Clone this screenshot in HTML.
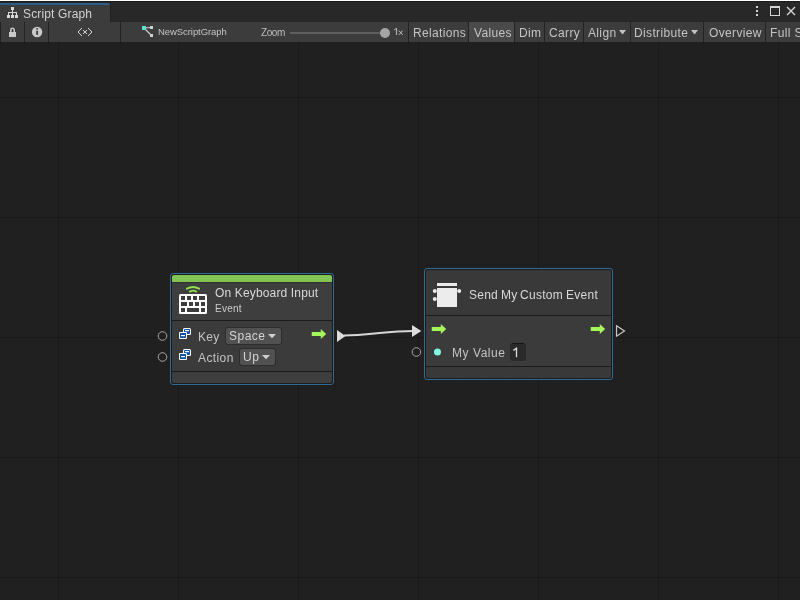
<!DOCTYPE html>
<html><head><meta charset="utf-8">
<style>
*{margin:0;padding:0;box-sizing:border-box}
html,body{-webkit-font-smoothing:antialiased;width:800px;height:600px;overflow:hidden;background:#202020;font-family:"Liberation Sans",sans-serif;}
.a{position:absolute}
.t{position:absolute;white-space:nowrap;line-height:1;will-change:transform}
.tb{font-size:12px;color:#c4c4c4;letter-spacing:0.35px}
#grid{position:absolute;left:0;top:42px;width:800px;height:558px;}
</style></head><body>
<!-- grid -->
<svg class="a" style="left:0;top:0" width="800" height="600">
  <defs>
    <pattern id="minor" x="10" y="1" width="12" height="12" patternUnits="userSpaceOnUse">
      <rect x="0" y="0" width="1" height="12" fill="#1e1e1e"/>
      <rect x="0" y="0" width="12" height="1" fill="#1e1e1e"/>
    </pattern>
    <pattern id="major" x="58" y="97" width="120" height="120" patternUnits="userSpaceOnUse">
      <rect x="0" y="0" width="1" height="120" fill="#191919"/>
      <rect x="0" y="0" width="120" height="1" fill="#191919"/>
    </pattern>
  </defs>
  <rect x="0" y="0" width="800" height="600" fill="#202020"/>
  <rect x="0" y="0" width="800" height="600" fill="url(#minor)"/>
  <rect x="0" y="0" width="800" height="600" fill="url(#major)"/>
</svg>

<!-- title strip -->
<div class="a" style="left:0;top:0;width:800px;height:1px;background:#fff"></div>
<div class="a" style="left:0;top:1px;width:800px;height:21px;background:#282828"></div>
<div class="a" style="left:0;top:1px;width:800px;height:1px;background:#1a1a1a"></div>
<!-- tab -->
<div class="a" style="left:0;top:3px;width:110px;height:19px;background:#3c3c3c;border-top:2px solid #2c5c89;border-top-right-radius:2px"></div>
<div class="a" style="left:110px;top:2px;width:1px;height:20px;background:#222"></div>
<div class="t" style="left:23px;top:8px;font-size:12px;color:#d2d2d2;letter-spacing:0.15px">Script Graph</div>
<svg class="a" style="left:0;top:0" width="120" height="42" shape-rendering="crispEdges">
  <g fill="#d8d8d8">
    <rect x="11" y="7" width="3" height="3"/>
    <rect x="12" y="10" width="1" height="5"/>
    <rect x="8" y="12" width="9" height="1"/>
    <rect x="8" y="12" width="1" height="3"/>
    <rect x="16" y="12" width="1" height="3"/>
    <rect x="7" y="15" width="3" height="3"/>
    <rect x="11" y="15" width="3" height="3"/>
    <rect x="15" y="15" width="3" height="3"/>
  </g>
</svg>
<!-- window controls -->
<svg class="a" style="left:740px;top:0" width="60" height="22">
  <g fill="#d4d4d4" shape-rendering="crispEdges">
    <rect x="16" y="6" width="2" height="2"/>
    <rect x="16" y="10" width="2" height="2"/>
    <rect x="16" y="14" width="2" height="2"/>
    <rect x="30" y="6" width="10" height="2"/>
    <rect x="30" y="6" width="1" height="10"/>
    <rect x="39" y="6" width="1" height="10"/>
    <rect x="30" y="15" width="10" height="1"/>
  </g>
  <path d="M47 7L55 15M55 7L47 15" stroke="#d4d4d4" stroke-width="1.4"/>
</svg>

<!-- toolbar -->
<div class="a" style="left:0;top:22px;width:800px;height:20px;background:#3c3c3c"></div>
<div class="a" style="left:0;top:22px;width:1px;height:20px;background:#232323"></div>
<div class="a" style="left:24px;top:22px;width:1px;height:20px;background:#232323"></div>
<div class="a" style="left:48px;top:22px;width:1px;height:20px;background:#232323"></div>
<div class="a" style="left:120px;top:22px;width:1px;height:20px;background:#232323"></div>
<div class="a" style="left:408px;top:22px;width:1px;height:20px;background:#232323"></div>
<div class="a" style="left:469px;top:22px;width:45px;height:20px;background:#4a4a4a"></div>
<div class="a" style="left:468px;top:22px;width:1px;height:20px;background:#232323"></div>
<div class="a" style="left:514px;top:22px;width:1px;height:20px;background:#232323"></div>
<div class="a" style="left:544px;top:22px;width:1px;height:20px;background:#232323"></div>
<div class="a" style="left:583px;top:22px;width:1px;height:20px;background:#232323"></div>
<div class="a" style="left:630px;top:22px;width:1px;height:20px;background:#232323"></div>
<div class="a" style="left:703px;top:22px;width:1px;height:20px;background:#232323"></div>
<div class="a" style="left:765px;top:22px;width:1px;height:20px;background:#232323"></div>

<svg class="a" style="left:0;top:22px" width="160" height="20">
  <!-- lock -->
  <path d="M10.8 10.5v-2.6a1.7 1.7 0 0 1 3.4 0v2.6" fill="none" stroke="#c8c8c8" stroke-width="1.5"/>
  <rect x="9" y="10" width="7" height="5" fill="#c8c8c8"/>
  <!-- info -->
  <circle cx="37.1" cy="10" r="5.2" fill="#c8c8c8"/>
  <rect x="36.2" y="6.2" width="1.8" height="1.4" fill="#3c3c3c"/>
  <rect x="36.2" y="8.8" width="1.8" height="4" fill="#3c3c3c"/>
  <!-- <x> -->
  <g fill="#d6d6d6" shape-rendering="crispEdges"><rect x="81" y="6" width="1" height="1"/><rect x="80" y="7" width="1" height="1"/><rect x="79" y="8" width="1" height="1"/><rect x="78" y="9" width="1" height="1"/><rect x="78" y="10" width="1" height="1"/><rect x="79" y="11" width="1" height="1"/><rect x="80" y="12" width="1" height="1"/><rect x="81" y="13" width="1" height="1"/><rect x="88" y="6" width="1" height="1"/><rect x="89" y="7" width="1" height="1"/><rect x="90" y="8" width="1" height="1"/><rect x="91" y="9" width="1" height="1"/><rect x="91" y="10" width="1" height="1"/><rect x="90" y="11" width="1" height="1"/><rect x="89" y="12" width="1" height="1"/><rect x="88" y="13" width="1" height="1"/><rect x="83" y="8" width="1" height="1"/><rect x="86" y="8" width="1" height="1"/><rect x="83" y="11" width="1" height="1"/><rect x="86" y="11" width="1" height="1"/><rect x="84" y="9" width="2" height="2"/></g>
  <!-- graph icon -->
  <path d="M144 6L151.5 5.5M144 6L151.5 13.5" stroke="#d0d0d0" stroke-width="1.2"/>
  <rect x="142" y="4" width="4" height="4" fill="#5ee0d0"/>
  <rect x="150" y="4" width="3" height="3" fill="#d0d0d0"/>
  <rect x="150" y="12" width="3" height="3" fill="#d0d0d0"/>
</svg>
<div class="t tb" style="left:413px;top:27px">Relations</div>
<div class="t tb" style="left:474px;top:27px">Values</div>
<div class="t tb" style="left:519px;top:27px">Dim</div>
<div class="t tb" style="left:549px;top:27px">Carry</div>
<div class="t tb" style="left:588px;top:27px">Align</div>
<div class="t tb" style="left:634px;top:27px">Distribute</div>
<div class="t tb" style="left:709px;top:27px">Overview</div>
<div class="t tb" style="left:770px;top:27px">Full Screen</div>
<svg class="a" style="left:0;top:0" width="800" height="50">
  <path d="M619 30h7l-3.5 4.5z" fill="#c4c4c4"/>
  <path d="M691 30h7l-3.5 4.5z" fill="#c4c4c4"/>
</svg>

<div class="t" style="left:261px;top:27.5px;font-size:10px;letter-spacing:-0.45px;color:#bdbdbd">Zoom</div>
<svg class="a" style="left:390px;top:24px" width="16" height="16"><path d="M4.2 6L6.6 4.3V10.9" fill="none" stroke="#c0c0c0" stroke-width="1"/><path d="M8.9 6.6L12.6 10.8M12.6 6.6L8.9 10.8" fill="none" stroke="#c0c0c0" stroke-width="1"/></svg>
<div class="a" style="left:290px;top:32px;width:92px;height:2px;background:#5f5f5f"></div>
<div class="a" style="left:380px;top:28px;width:10px;height:10px;border-radius:50%;background:#a5a5a5"></div>
<div class="t" style="left:158px;top:27px;font-size:9.5px;letter-spacing:-0.07px;color:#c4c4c4">NewScriptGraph</div>


<!-- NODE A: On Keyboard Input -->
<div class="a" style="left:170px;top:273px;width:164px;height:112px;border:1px solid #2f6b94;border-radius:3px;background:#1b1b1b"></div>
<div class="a" style="left:172px;top:275px;width:160px;height:108px;border-radius:2px;overflow:hidden;background:#3e3e3e">
  <div class="a" style="left:0;top:0;width:160px;height:7px;background:#84c452"></div>
  <div class="a" style="left:0;top:7px;width:160px;height:1px;background:#2e2e2e"></div>
  <div class="a" style="left:0;top:45px;width:160px;height:1px;background:#1b1b1b"></div>
  <div class="a" style="left:0;top:46px;width:160px;height:50px;background:#3b3b3b"></div>
  <div class="a" style="left:0;top:96px;width:160px;height:1px;background:#1b1b1b"></div>
</div>
<svg class="a" style="left:0;top:0" width="800" height="600">
  <!-- keyboard icon -->
  <rect x="179" y="294" width="28" height="20" rx="1.5" fill="#ffffff"/>
  <g fill="#3e3e3e">
    <rect x="181" y="296" width="4" height="4"/><rect x="187" y="296" width="4" height="4"/><rect x="193" y="296" width="4" height="4"/><rect x="199" y="296" width="6" height="4"/>
    <rect x="181" y="302" width="6" height="4"/><rect x="189" y="302" width="4" height="4"/><rect x="195" y="302" width="4" height="4"/><rect x="201" y="302" width="4" height="4"/>
    <rect x="181" y="308" width="4" height="4"/><rect x="187" y="308" width="12" height="4"/><rect x="201" y="308" width="4" height="4"/>
  </g>
  <path d="M186.9 288.7Q193 285.4 199.1 288.7" fill="none" stroke="#8ee04e" stroke-width="1.9" stroke-linecap="round"/>
  <path d="M189.8 291.6Q193 289.6 196.2 291.6" fill="none" stroke="#8ee04e" stroke-width="1.9" stroke-linecap="round"/>
  <!-- ports left -->
  <circle cx="162.5" cy="336" r="4.3" fill="none" stroke="#a8a8a8" stroke-width="1"/>
  <circle cx="162.5" cy="357" r="4.3" fill="none" stroke="#a8a8a8" stroke-width="1"/>
  <!-- enum icons -->
  <g>
    <rect x="183" y="328" width="8" height="7" rx="1.5" fill="#fff"/>
    <rect x="184" y="329" width="6" height="5" rx="1" fill="#0d50a8"/>
    <rect x="185" y="330" width="4" height="1.2" fill="#fff"/>
    <rect x="179" y="332" width="8" height="7" rx="1" fill="#fff"/>
    <rect x="180" y="333" width="6" height="5" fill="#0d50a8"/>
    <rect x="181" y="335" width="4" height="1.2" fill="#fff"/>
  </g>
  <g>
    <rect x="183" y="349" width="8" height="7" rx="1.5" fill="#fff"/>
    <rect x="184" y="350" width="6" height="5" rx="1" fill="#0d50a8"/>
    <rect x="185" y="351" width="4" height="1.2" fill="#fff"/>
    <rect x="179" y="353" width="8" height="7" rx="1" fill="#fff"/>
    <rect x="180" y="354" width="6" height="5" fill="#0d50a8"/>
    <rect x="181" y="356" width="4" height="1.2" fill="#fff"/>
  </g>
  <!-- dropdowns -->
  <rect x="225" y="327" width="57" height="18" rx="3" fill="#2d2d2d"/>
  <rect x="226" y="328" width="55" height="16" rx="2" fill="#515151"/>
  <path d="M268 334h8l-4 4.2z" fill="#d0d0d0"/>
  <rect x="239" y="348" width="37" height="18" rx="3" fill="#2d2d2d"/>
  <rect x="240" y="349" width="35" height="16" rx="2" fill="#515151"/>
  <path d="M262 355h8l-4 4.2z" fill="#d0d0d0"/>
  <!-- green arrow A -->
  <path d="M311.75 331.9H320.8V328.9L326.2 334L320.8 339.1V336.1H311.75Z" fill="#a6f55a"/>
  <!-- out port triangle A -->
  <path d="M337 330L345.5 336L337 342Z" fill="#dcdcdc"/>
  <!-- edge -->
  <path d="M344 335.6C366 335.4 390 331 413 331" fill="none" stroke="#d6d6d6" stroke-width="2"/>
  <path d="M412 325L421.3 331L412 337Z" fill="#dcdcdc"/>
</svg>
<div class="t" style="left:215px;top:287px;font-size:12px;color:#d8d8d8;letter-spacing:0.15px">On Keyboard Input</div>
<div class="t" style="left:215.3px;top:304.3px;font-size:10px;color:#cccccc;letter-spacing:0.25px">Event</div>
<div class="t" style="left:198px;top:331px;font-size:12px;color:#c4c4c4;letter-spacing:0.3px">Key</div>
<div class="t" style="left:198px;top:352px;font-size:12px;color:#c4c4c4;letter-spacing:0.4px">Action</div>
<div class="t" style="left:229px;top:330px;font-size:12px;color:#d4d4d4;letter-spacing:0.5px">Space</div>
<div class="t" style="left:243px;top:351px;font-size:12px;color:#d4d4d4;letter-spacing:0.5px">Up</div>

<!-- NODE B: Send My Custom Event -->
<div class="a" style="left:424px;top:268px;width:189px;height:112px;border:1px solid #2f6b94;border-radius:3px;background:#1b1b1b"></div>
<div class="a" style="left:426px;top:270px;width:185px;height:108px;border-radius:2px;overflow:hidden;background:#393939">
  <div class="a" style="left:0;top:45px;width:185px;height:1px;background:#1b1b1b"></div>
  <div class="a" style="left:0;top:46px;width:185px;height:50px;background:#3b3b3b"></div>
  <div class="a" style="left:0;top:96px;width:185px;height:1px;background:#1b1b1b"></div>
</div>
<svg class="a" style="left:0;top:0" width="800" height="600">
  <!-- send icon -->
  <rect x="437" y="283" width="20" height="3" fill="#ececec"/>
  <rect x="437" y="288" width="20" height="19" fill="#ececec"/>
  <circle cx="434.8" cy="291" r="2" fill="#ececec"/>
  <circle cx="434.8" cy="299" r="2" fill="#ececec"/>
  <circle cx="459.2" cy="291" r="2" fill="#ececec"/>
  <!-- arrows -->
  <path d="M431.75 326.9H440.8V323.9L446.2 329L440.8 334.1V331.1H431.75Z" fill="#a6f55a"/>
  <path d="M590.75 326.9H599.8V323.9L605.2 329L599.8 334.1V331.1H590.75Z" fill="#a6f55a"/>
  <!-- out triangle hollow -->
  <path d="M616.5 325.8L624.5 331L616.5 336.2Z" fill="none" stroke="#c8c8c8" stroke-width="1.2"/>
  <!-- port circle -->
  <circle cx="416.4" cy="352" r="4.3" fill="none" stroke="#a8a8a8" stroke-width="1"/>
  <circle cx="437.5" cy="352" r="3.5" fill="#7ff8e4"/>
  <!-- input field -->
  <rect x="510" y="343" width="16" height="18" rx="3" fill="#2a2a2a"/>
  <rect x="512" y="343" width="12" height="1" fill="#151515"/>
  <path d="M513.4 350.4L516.5 348.2V357.2" fill="none" stroke="#dedede" stroke-width="1.3"/>
</svg>
<div class="t" style="left:469px;top:289px;font-size:12px;color:#d8d8d8;letter-spacing:0.25px">Send</div>
<div class="t" style="left:501px;top:289px;font-size:12px;color:#d8d8d8;letter-spacing:0.25px">My</div>
<div class="t" style="left:520px;top:289px;font-size:12px;color:#d8d8d8;letter-spacing:0.3px">Custom</div>
<div class="t" style="left:566px;top:289px;font-size:12px;color:#d8d8d8;letter-spacing:0.3px">Event</div>
<div class="t" style="left:452px;top:347px;font-size:12px;color:#c4c4c4;letter-spacing:0.55px">My Value</div>


</body></html>
